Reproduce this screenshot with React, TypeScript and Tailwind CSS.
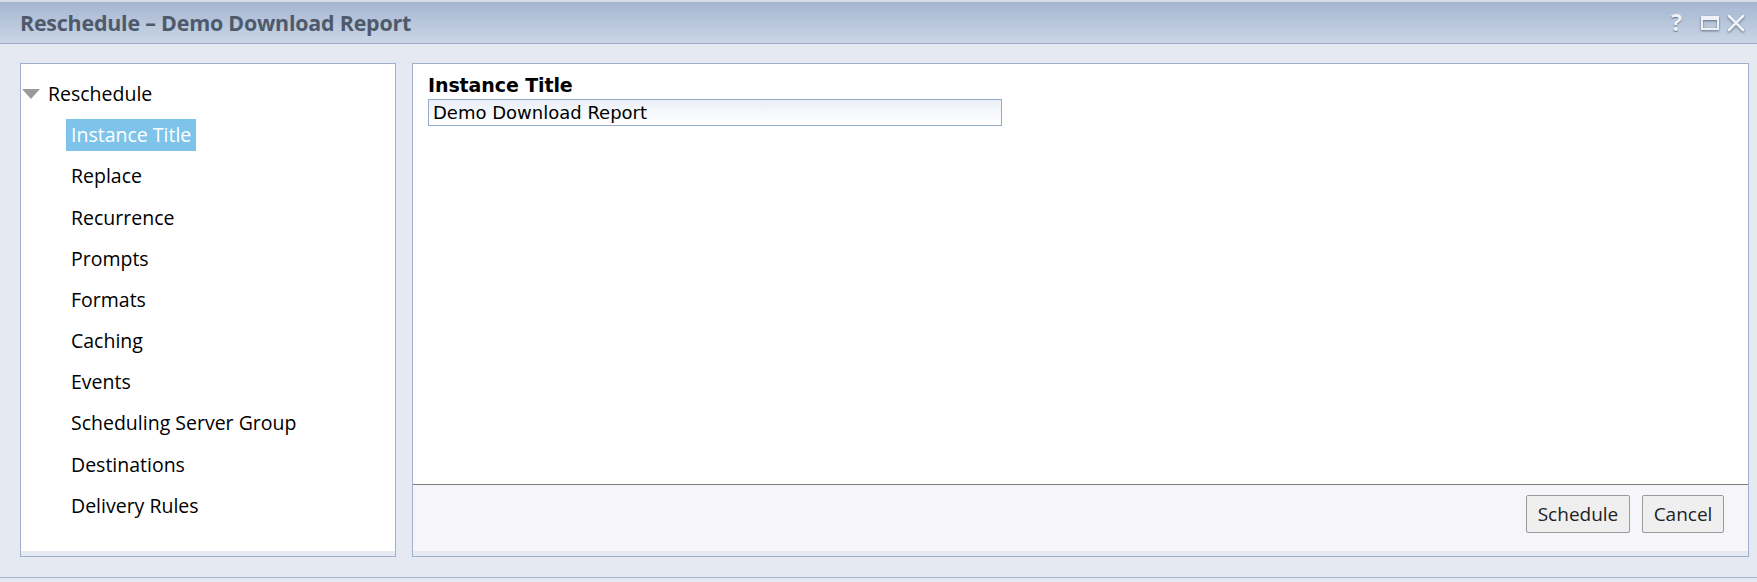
import React from "react";

const items = [
  "Instance Title",
  "Replace",
  "Recurrence",
  "Prompts",
  "Formats",
  "Caching",
  "Events",
  "Scheduling Server Group",
  "Destinations",
  "Delivery Rules",
];

export default function App() {
  const selected = "Instance Title";

  return (
    <div className="w-[1757px] h-[582px] bg-[#e4e9f2] flex flex-col font-['Open_Sans',sans-serif] text-black overflow-hidden">
      {/* Title bar */}
      <header className="h-[44px] shrink-0 border-t-2 border-t-[#d6dde9] border-b border-b-[#9caecb] bg-gradient-to-b from-[#a5b6cf] to-[#cad6e7] flex items-center justify-between pl-[20px] pr-[12px]">
        <h1 className="text-[21.4px] font-bold text-[#4e5a6c] tracking-[-0.2px] leading-none">
          Reschedule – Demo Download Report
        </h1>
        <div className="flex items-center gap-[8px] text-[#eef1f6]">
          <span className="text-[23px] font-bold leading-none mr-[11px] [text-shadow:0_1px_1px_#5f6d82]">?</span>
          <svg width="18" height="14" viewBox="0 0 18 14" className="drop-shadow-[0_1px_0.8px_#5f6d82]">
            <rect x="1" y="1" width="16" height="12" fill="none" stroke="#eef1f6" strokeWidth="2" />
            <rect x="1" y="1" width="16" height="3" fill="#eef1f6" />
          </svg>
          <svg width="18" height="18" viewBox="0 0 18 18" className="drop-shadow-[0_1px_0.8px_#5f6d82]">
            <path d="M2 2 L16 16 M16 2 L2 16" stroke="#eef1f6" strokeWidth="2.6" strokeLinecap="round" />
          </svg>
        </div>
      </header>

      {/* Body */}
      <div className="h-[533px] shrink-0 flex gap-[16px] pl-[20px] pr-[8px] pt-[19px] pb-[20px]">
        {/* Navigation tree */}
        <aside className="w-[376px] shrink-0 border border-[#9eb0ce] bg-white flex flex-col">
          <nav className="flex-1 pt-[9px] text-[19.5px]">
            <div className="h-[41.2px] flex items-center">
              <svg width="18" height="12" viewBox="0 0 18 12" className="ml-[1px] mr-[8px]">
                <path d="M0 1 L18 1 L9 11 Z" fill="#9a9a9a" />
              </svg>
              <span>Reschedule</span>
            </div>
            {items.map((item) => (
              <div key={item} className="h-[41.2px] flex items-center pl-[45px]">
                <span
                  className={
                    item === selected
                      ? "px-[5px] h-[32px] flex items-center bg-[#7ec4ea] text-white"
                      : "px-[5px] h-[32px] flex items-center"
                  }
                >
                  {item}
                </span>
              </div>
            ))}
          </nav>
          <div className="h-[5px] bg-[#e4e9f2]" />
        </aside>

        {/* Main panel */}
        <main className="flex-1 border border-[#9eb0ce] bg-white flex flex-col">
          <section className="flex-1 pl-[15px] pt-[8px]">
            <h2 className="font-['DejaVu_Sans',sans-serif] font-bold text-[19px] tracking-[-0.1px] leading-[27px]">
              Instance Title
            </h2>
            <input
              readOnly
              value="Demo Download Report"
              className="block w-[574px] h-[27px] border border-[#98aac9] bg-gradient-to-b from-[#ebf0f7] to-white px-[4px] text-[18px] font-['DejaVu_Sans',sans-serif] tracking-[0px] outline-none"
            />
          </section>
          <footer className="h-[67px] shrink-0 border-t border-[#7b7b7b] bg-[#f5f5fa] flex justify-end items-start gap-[12px] pt-[10px] pr-[24px]">
            <button className="h-[38px] w-[104px] border border-[#9a9a9a] rounded-[2px] bg-[#efefef] text-[19px] text-[#222]">
              Schedule
            </button>
            <button className="h-[38px] w-[82px] border border-[#9a9a9a] rounded-[2px] bg-[#efefef] text-[19px] text-[#222]">
              Cancel
            </button>
          </footer>
          <div className="h-[5px] shrink-0 bg-[#e4e9f2]" />
        </main>
      </div>

      <div className="flex-1 border-t border-[#a3b3cf]" />
    </div>
  );
}
